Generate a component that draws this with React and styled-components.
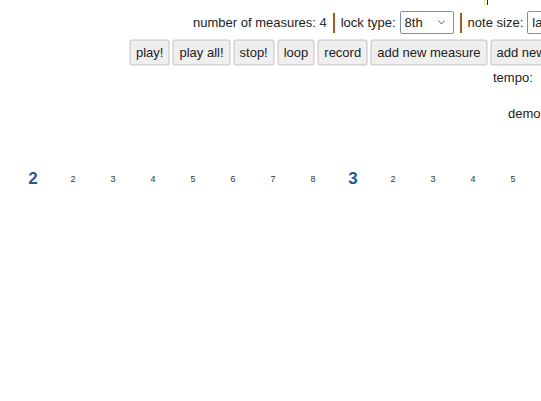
import React, { useLayoutEffect, useRef } from "react";
import styled, { createGlobalStyle } from "styled-components";

const GlobalStyle = createGlobalStyle`
  body {
    margin: 0;
    background: #fff;
    font-family: "Liberation Sans", Arial, sans-serif;
    color: #222;
  }
`;

const Scroller = styled.div`
  width: 100%;
  overflow-x: auto;
  overflow-y: hidden;
  scrollbar-width: none;
  &::-webkit-scrollbar {
    display: none;
  }
`;

const Stage = styled.div`
  box-sizing: border-box;
  width: 1760px;
  padding: 8px;
  font-size: 13px;
`;

const Row = styled.div`
  display: flex;
  justify-content: center;
  align-items: center;
  height: ${(p) => p.$height || 24}px;
  margin-top: ${(p) => p.$top || 0}px;
`;

const Group = styled.div`
  display: flex;
  align-items: center;
  flex: none;
  width: ${(p) => p.$width}px;
  white-space: nowrap;
`;

const Label = styled.span`
  position: relative;
  margin-right: ${(p) => p.$space || 4}px;
`;

const Marker = styled.span`
  position: absolute;
  top: -15px;
  left: 16px;
  width: 2px;
  height: 5px;
  border-left: 1px solid #f0d6a4;
  border-right: 1px solid #2a2a2a;
`;

const Count = styled.span`
  color: #2b3550;
`;

const Divider = styled.span`
  display: inline-block;
  width: 2px;
  height: 20px;
  margin: 0 6px 0 ${(p) => p.$left || 2}px;
  background: #a8581c;
`;

const SelectWrap = styled.span`
  position: relative;
  display: inline-flex;
  flex: none;
`;

const Select = styled.select`
  box-sizing: border-box;
  width: ${(p) => p.$width}px;
  height: 23px;
  padding: 0 0 0 4px;
  appearance: none;
  font-family: "Liberation Sans", Arial, sans-serif;
  font-size: 13px;
  color: #222;
  background: #fff;
  border: 1px solid #8090a6;
  border-radius: 2px;
  outline: none;
`;

const Chevron = styled.svg`
  position: absolute;
  top: 9px;
  right: 9px;
  width: 7px;
  height: 5px;
  pointer-events: none;
`;

const Input = styled.input`
  box-sizing: border-box;
  width: ${(p) => p.$width}px;
  height: 22px;
  font-size: 13px;
  border: 1px solid #8090a6;
  border-radius: 2px;
`;

const Buttons = styled.div`
  display: flex;
  gap: 4px;
  flex: none;
  width: 860px;
`;

const Button = styled.button`
  flex: none;
  height: 25px;
  padding: 0 5px;
  font-family: "Liberation Sans", Arial, sans-serif;
  font-size: 13px;
  color: #222;
  background: #efefef;
  border: 1px solid #d6d6d6;
  border-radius: 2px;
  box-shadow: 0 0 0 0.5px #c8c8c8;
`;

const Beats = styled.div`
  display: flex;
  height: 24px;
  margin: 42px 0 0 5px;
`;

const Measure = styled.div`
  display: flex;
`;

const Cell = styled.div`
  display: flex;
  align-items: center;
  justify-content: center;
  width: 40px;
  font-size: ${(p) => (p.$first ? "17px" : "9px")};
  font-weight: ${(p) => (p.$first ? "bold" : "normal")};
  color: ${(p) => (p.$first ? "#1c5a99" : "#333")};
`;

const buttons = [
  "play!",
  "play all!",
  "stop!",
  "loop",
  "record",
  "add new measure",
  "add new measure at start",
  "remove measure",
  "clear",
];

const measures = [1, 2, 3, 4];
const beats = [1, 2, 3, 4, 5, 6, 7, 8];

const Dropdown = ({ width, value, options }) => (
  <SelectWrap>
    <Select $width={width} defaultValue={value}>
      {options.map((o) => (
        <option key={o}>{o}</option>
      ))}
    </Select>
    <Chevron viewBox="0 0 7 5">
      <path d="M0.5 0.5 L3.5 4 L6.5 0.5" fill="none" stroke="#666" strokeWidth="1" />
    </Chevron>
  </SelectWrap>
);

export default function App() {
  const scrollRef = useRef(null);

  useLayoutEffect(() => {
    if (scrollRef.current) scrollRef.current.scrollLeft = 320;
  }, []);

  return (
    <>
      <GlobalStyle />
      <Scroller ref={scrollRef}>
        <Stage>
          <Row $height={29}>
            <Group $width={734}>
              <Label>
                number of measures: <Count>4</Count>
              </Label>
              <Divider />
              <Label>lock type:</Label>
              <Dropdown width={54} value="8th" options={["4th", "8th", "16th"]} />
              <Divider $left={6} />
              <Label>
                <Marker />
                note size:
              </Label>
              <Dropdown width={96} value="last used" options={["last used", "8th"]} />
              <Divider $left={6} />
              <Label>time signature:</Label>
              <Dropdown width={54} value="4/4" options={["4/4", "3/4"]} />
            </Group>
          </Row>
          <Row $height={26} $top={2}>
            <Buttons>
              {buttons.map((b) => (
                <Button key={b} type="button">
                  {b}
                </Button>
              ))}
            </Buttons>
          </Row>
          <Row>
            <Group $width={134}>
              <Label $space={14}>tempo:</Label>
              <Input $width={80} defaultValue="120" />
            </Group>
          </Row>
          <Row $top={12}>
            <Group $width={104}>
              <Label $space={14}>demo</Label>
              <Dropdown width={58} value="none" options={["none"]} />
            </Group>
          </Row>
          <Beats>
            {measures.map((m) => (
              <Measure key={m}>
                {beats.map((b) => (
                  <Cell key={b} $first={b === 1}>
                    {b === 1 ? m : b}
                  </Cell>
                ))}
              </Measure>
            ))}
          </Beats>
        </Stage>
      </Scroller>
    </>
  );
}
